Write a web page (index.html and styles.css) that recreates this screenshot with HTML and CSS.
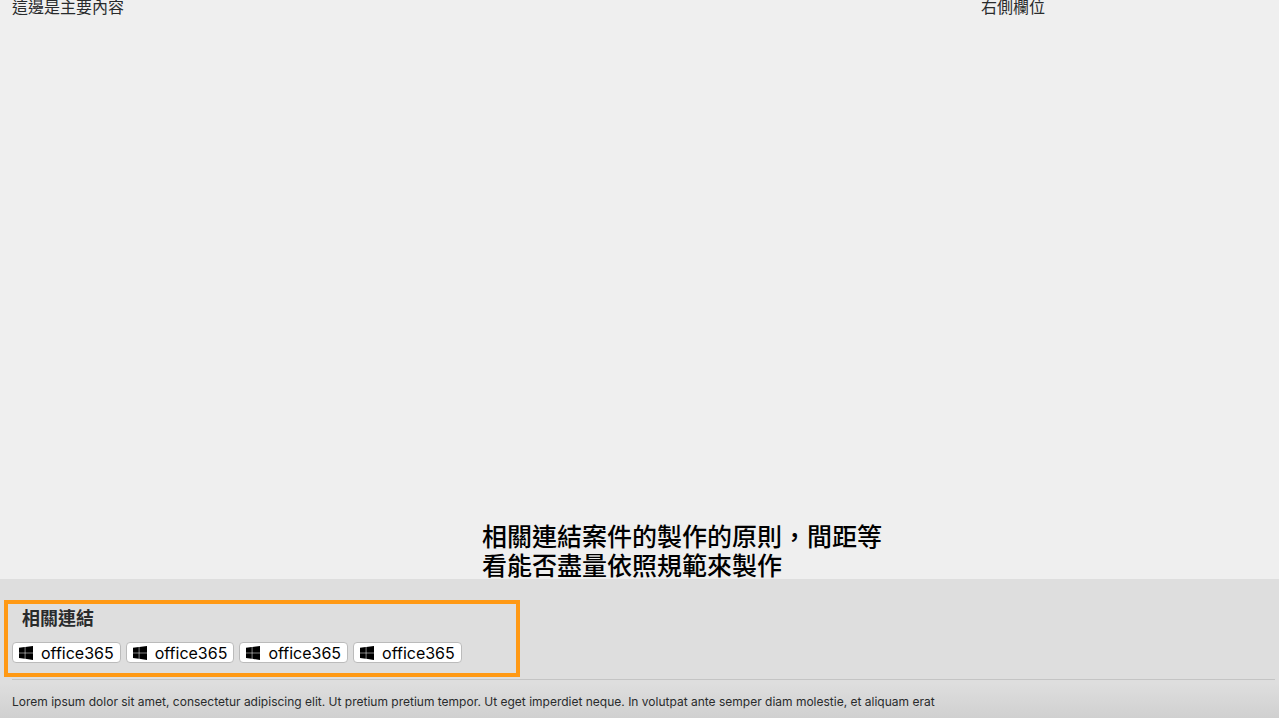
FILE: index.html
```html
<!DOCTYPE html>
<html lang="zh-Hant">
<head>
<meta charset="utf-8">
<meta name="viewport" content="width=device-width, initial-scale=1">
<title>相關連結</title>
<link rel="stylesheet" href="styles.css">
</head>
<body>
<svg class="symbols" aria-hidden="true">
  <symbol id="windows" viewBox="0 0 14 14">
    <path d="M0 1.8 5.8 1V6.7H0zM6.3 .9 14 0V6.7H6.3zM0 7.3H5.8V12.7L0 11.9zM6.3 7.3H14V14L6.3 12.8z"/>
  </symbol>
</svg>
<div class="content">
  <main class="primary">這邊是主要內容</main>
  <aside class="sidebar">右側欄位</aside>
  <p class="note">相關連結案件的製作的原則，間距等<br>看能否盡量依照規範來製作</p>
</div>
<footer class="footer">
  <section class="related">
    <h2 class="related-title">相關連結</h2>
    <nav class="links">
      <a class="link" href="#"><svg class="icon" aria-hidden="true"><use href="#windows"/></svg>office365</a>
      <a class="link" href="#"><svg class="icon" aria-hidden="true"><use href="#windows"/></svg>office365</a>
      <a class="link" href="#"><svg class="icon" aria-hidden="true"><use href="#windows"/></svg>office365</a>
      <a class="link" href="#"><svg class="icon" aria-hidden="true"><use href="#windows"/></svg>office365</a>
    </nav>
  </section>
  <p class="legal">Lorem ipsum dolor sit amet, consectetur adipiscing elit. Ut pretium pretium tempor. Ut eget imperdiet neque. In volutpat ante semper diam molestie, et aliquam erat</p>
</footer>
</body>
</html>
```
FILE: styles.css
```css
* {
  box-sizing: border-box;
}

body {
  margin: 0;
  min-height: 100vh;
  display: flex;
  flex-direction: column;
  background: #efefef;
  color: #292b2c;
  font-family: Inter, "Noto Sans CJK TC", sans-serif;
  font-size: 16px;
  line-height: 24px;
}

.symbols {
  display: none;
}

.content {
  position: relative;
  flex: 1;
  display: grid;
  grid-template-columns: minmax(0, 1fr) 310px;
  line-height: 14px;
}

.primary,
.sidebar {
  padding: 0 12px;
}

.note {
  position: absolute;
  left: 482px;
  bottom: -2px;
  margin: 0;
  color: #000;
  font-size: 25px;
  font-weight: 500;
  line-height: 29px;
}

.footer {
  padding: 21px 4px 0;
  background: linear-gradient(#dedede 75%, #d0d0d0);
}

.related {
  width: 516px;
  max-width: 100%;
  padding: 3px 4px 10px;
  border: 4px solid #ff9914;
}

.related-title {
  margin: 0 0 11px;
  padding-left: 10px;
  font-size: 18px;
  line-height: 24px;
}

.links {
  display: flex;
  flex-wrap: wrap;
  gap: 5px;
}

.link {
  display: flex;
  align-items: center;
  gap: 8px;
  height: 21px;
  padding: 0 6px;
  border: 1px solid #bbb;
  border-radius: 4px;
  background: #fff;
  color: #000;
  line-height: 18px;
  text-decoration: none;
}

.icon {
  width: 14px;
  height: 14px;
}

.legal {
  margin: 2px 0 0 8px;
  padding: 12px 0 6px;
  border-top: 1px solid #c4c4c4;
  font-size: 12px;
  line-height: 20px;
}
```
